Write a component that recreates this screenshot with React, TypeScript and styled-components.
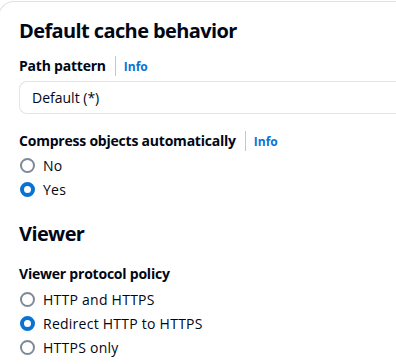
import styled, { createGlobalStyle } from 'styled-components';

const GlobalStyle = createGlobalStyle`
  body {
    margin: 0;
    background: #ffffff;
    font-family: "Open Sans", "Noto Sans", "Liberation Sans", sans-serif;
    color: #000716;
  }
`;

const Card = styled.div`
  margin: 1px 0 0 -2px;
  border: 1px solid #dde1e5;
  border-right: none;
  border-radius: 16px 0 0 0;
  padding: 16px 0 20px 20px;
  height: 370px;
  box-sizing: border-box;
  overflow: hidden;
`;

const Heading = styled.h2`
  margin: 0;
  font-size: 20px;
  line-height: 26px;
  font-weight: 700;
  letter-spacing: -0.6px;
`;

const Section = styled.div<{ $top: number }>`
  margin-top: ${(p) => p.$top}px;
`;

const LabelRow = styled.div`
  display: flex;
  align-items: center;
  height: 22px;
`;

const Label = styled.span`
  display: block;
  font-size: 14px;
  font-weight: 700;
  line-height: 22px;
  letter-spacing: -0.22px;
`;

const Divider = styled.span`
  width: 1px;
  height: 20px;
  background: #c6c6cd;
  margin: 0 8px 0 9px;
`;

const InfoLink = styled.a`
  font-size: 12px;
  font-weight: 700;
  color: #0972d3;
  text-decoration: none;
`;

const Input = styled.div`
  margin-top: 4px;
  height: 33px;
  box-sizing: border-box;
  border: 1px solid #e2e4e8;
  border-right: none;
  border-radius: 8px 0 0 8px;
  padding: 0 12px;
  display: flex;
  align-items: center;
  font-size: 14px;
`;

const RadioList = styled.div<{ $gap: number }>`
  display: flex;
  flex-direction: column;
  margin-top: ${(p) => p.$gap}px;
`;

const RadioRow = styled.label`
  display: flex;
  align-items: center;
  height: 24px;
  font-size: 14px;
  letter-spacing: 0.25px;
  gap: 8px;
`;

const Circle = styled.span<{ $checked: boolean }>`
  width: 15px;
  height: 15px;
  border-radius: 50%;
  box-sizing: border-box;
  margin-left: 1px;
  border: ${(p) => (p.$checked ? '4px solid #0972d3' : '2px solid #7d8998')};
  background: #fff;
`;

function Radio({ label, checked }: { label: string; checked?: boolean }) {
  return (
    <RadioRow>
      <Circle $checked={!!checked} />
      <span>{label}</span>
    </RadioRow>
  );
}

function FieldLabel({ text }: { text: string }) {
  return (
    <LabelRow>
      <Label>{text}</Label>
      <Divider />
      <InfoLink>Info</InfoLink>
    </LabelRow>
  );
}

export default function App() {
  return (
    <>
      <GlobalStyle />
      <Card>
        <Heading>Default cache behavior</Heading>
        <Section $top={11}>
          <FieldLabel text="Path pattern" />
          <Input>Default (*)</Input>
        </Section>
        <Section $top={16}>
          <FieldLabel text="Compress objects automatically" />
          <RadioList $gap={1}>
            <Radio label="No" />
            <Radio label="Yes" checked />
          </RadioList>
        </Section>
        <Section $top={20}>
          <Heading>Viewer</Heading>
        </Section>
        <Section $top={16}>
          <Label>Viewer protocol policy</Label>
          <RadioList $gap={2}>
            <Radio label="HTTP and HTTPS" />
            <Radio label="Redirect HTTP to HTTPS" checked />
            <Radio label="HTTPS only" />
          </RadioList>
        </Section>
      </Card>
    </>
  );
}
